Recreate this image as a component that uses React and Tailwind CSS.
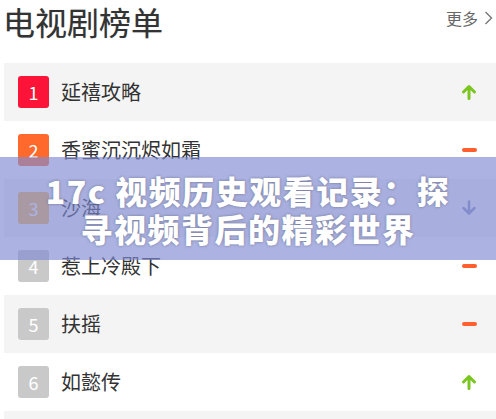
import React from "react";

const rows = [
  { n: 1, name: "延禧攻略", badge: "bg-[#fb1438]", trend: "up" },
  { n: 2, name: "香蜜沉沉烬如霜", badge: "bg-[#ff6a2c]", trend: "flat" },
  { n: 3, name: "沙海", badge: "bg-[#f5b64a]", trend: "down" },
  { n: 4, name: "惹上冷殿下", badge: "bg-[#c9c9c9]", trend: "flat" },
  { n: 5, name: "扶摇", badge: "bg-[#c9c9c9]", trend: "flat" },
  { n: 6, name: "如懿传", badge: "bg-[#c9c9c9]", trend: "up" },
];

function Trend({ t }) {
  if (t === "up")
    return (
      <svg width="16" height="16" viewBox="0 0 16 16">
        <path d="M8 14.5V3M2.5 8L8 2.5 13.5 8" fill="none" stroke="#7ac520" strokeWidth="3" strokeLinecap="round" strokeLinejoin="round" />
      </svg>
    );
  if (t === "down")
    return (
      <svg width="16" height="16" viewBox="0 0 16 16">
        <path d="M8 1.5V13M2.5 8L8 13.5 13.5 8" fill="none" stroke="#8a93c6" strokeWidth="2.5" strokeLinecap="round" strokeLinejoin="round" />
      </svg>
    );
  if (t === "flat") return <div className="w-[15px] h-[4px] rounded-full bg-[#ff5f2e]" />;
  return null;
}

export default function App() {
  return (
    <div className="relative w-[496px] h-[419px] overflow-hidden bg-white" style={{ fontFamily: '"Noto Sans CJK SC", "Noto Sans", sans-serif' }}>
      <div className="flex items-center justify-between pl-[3px] pr-[3px] h-[42px]">
        <div className="text-[32px] leading-[42px] text-[#333] [text-shadow:0_0_1px_rgba(0,0,0,0.3)]">电视剧榜单</div>
        <div className="flex items-center gap-[6px] text-[16px] text-[#666] -mt-[6px]">
          <span>更多</span>
          <svg width="9" height="16" viewBox="0 0 9 16"><path d="M1.5 2l6 6-6 6" fill="none" stroke="#777" strokeWidth="1.4" /></svg>
        </div>
      </div>
      <div className="pl-[4px] mt-[21px] flex flex-col">
        {rows.map((r, i) => (
          <div key={r.n} className={`flex items-center h-[58px] pl-[14px] pr-[19px] ${i % 2 === 0 ? "bg-[#f4f4f4]" : "bg-white"}`}>
            <div className={`w-[31px] h-[32px] rounded-[3px] ${r.badge} text-white text-[18px] flex items-center justify-center`}>{r.n}</div>
            <div className="ml-[12px] flex-1 text-[20px] text-[#333]">{r.name}</div>
            <Trend t={r.trend} />
          </div>
        ))}
        <div className="h-[58px] bg-[#f4f4f4]" />
      </div>
      <div className="absolute left-0 right-0 top-[157px] h-[103px] bg-[rgba(128,138,210,0.65)] flex items-center justify-center">
        <div className="w-[430px] text-center text-white font-black text-[32px] leading-[38px] tracking-[1.5px] [text-shadow:0_0_3px_rgba(0,0,0,0.35)]">
          17c 视频历史观看记录：探寻视频背后的精彩世界
        </div>
      </div>
    </div>
  );
}
